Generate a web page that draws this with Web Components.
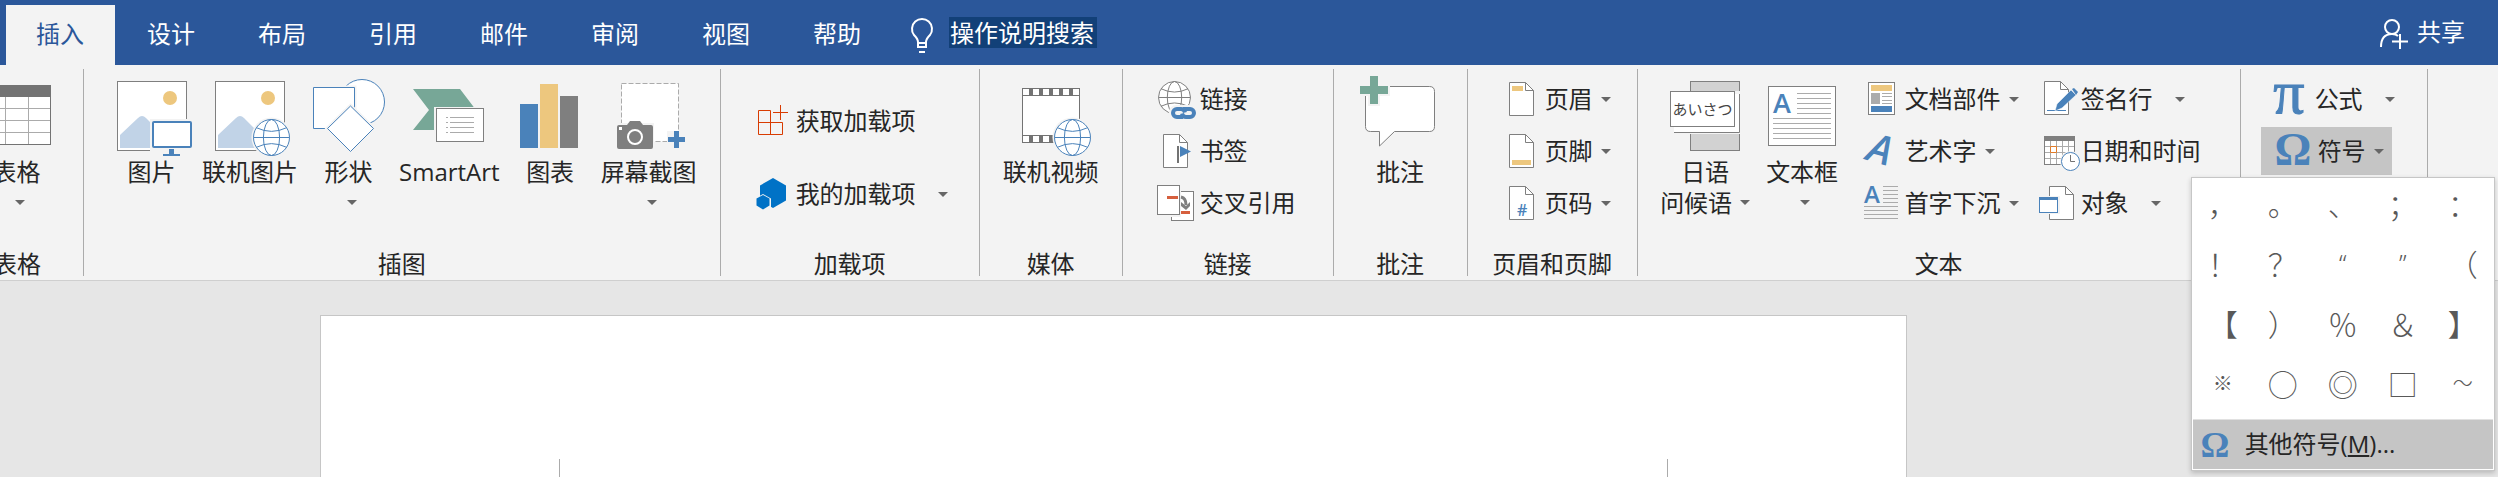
<!DOCTYPE html>
<html lang="zh-CN">
<head>
<meta charset="utf-8">
<title>文档编辑器</title>
<style>
  html, body { margin: 0; height: 100%; }
  body {
    font: 24px/31px "Open Sans", "Noto Sans CJK SC", sans-serif;
    color: #262626;
    background: #e6e6e6;
    overflow: hidden;
  }
</style>
</head>
<body>
<word-window></word-window>

<script>
const BLUE = '#4a82ba', GRAY = '#7f7f7f', GOLD = '#edc77e', GREEN = '#77a797';

const globe = (cx, cy, r, color) => `
  <circle cx="${cx}" cy="${cy}" r="${r + 2}" fill="#f3f3f3"/>
  <g fill="none" stroke="${color}">
    <circle cx="${cx}" cy="${cy}" r="${r}" fill="#fff"/>
    <ellipse cx="${cx}" cy="${cy}" rx="${r * .45}" ry="${r}"/>
    <path d="M${cx - r} ${cy}h${2 * r}"/>
    <path d="M${cx - r * .85} ${cy - r * .55}q${r * .85} ${r * .42} ${r * 1.7} 0M${cx - r * .85} ${cy + r * .55}q${r * .85} ${-r * .42} ${r * 1.7} 0"/>
  </g>`;
const sheet = (x, y) => `
  <path d="M${x} ${y}h16l8 8v25h-24z" fill="#fff" stroke="${GRAY}"/>
  <path d="M${x + 16} ${y}v8h8" fill="none" stroke="${GRAY}"/>`;
const photo = `
  <rect x="13.5" y="3.5" width="69" height="69" fill="#fff" stroke="${GRAY}"/>
  <circle cx="66" cy="20" r="7" fill="${GOLD}"/>
  <path d="M16 70V57L34 40q4-4 8 0l30 30z" fill="#c1d3e7"/>`;
const rules = (x1, x2, ys) => `<path stroke="#ababab" d="${ys.map(y => `M${x1} ${y}H${x2}`).join('')}"/>`;

const ICONS = {
  table: `<rect x="13.5" y="7.5" width="68" height="59" fill="#fff" stroke="#737373"/>
    <path d="M36.5 18v48M59.5 18v48M14 30.5h67M14 42.5h67M14 54.5h67" stroke="#ababab"/>
    <path d="M13 7h69v12H13z" fill="#737373"/>`,
  picture: `${photo}<rect x="46" y="41" width="44" height="32" fill="#f3f3f3"/>
    <rect x="49" y="44" width="38" height="25" rx="1" fill="#fff" stroke="${BLUE}" stroke-width="2"/>
    <path d="M65 71h5v5h6v2H59v-2h6z" fill="${BLUE}"/>`,
  online: photo + globe(69.5, 59.5, 18, BLUE),
  shapes: `<g fill="#fff" stroke="${BLUE}"><circle cx="61" cy="24" r="22.5"/>
    <path d="M12.500 9.500h41v41h-41z" stroke="#f3f3f3" stroke-width="4"/><path d="M12.500 9.500h41v41h-41z"/>
    <path d="M49.500 28l23 22.500-23 23-23-23z" stroke="#f3f3f3" stroke-width="4"/><path d="M49.500 28l23 22.500-23 23-23-23z"/></g>`,
  smartart: `<path d="M12 11h47l16 21-16 20H12l16-20z" fill="${GREEN}"/>
    <path d="M33 29h52v38H33z" fill="#f3f3f3"/><rect x="35.500" y="30.500" width="47" height="33" fill="#fff" stroke="${GRAY}"/>
    <path d="M45 39.500h2m2 0h24M45 44.500h2m2 0h24M45 49.500h2m2 0h24M45 54.500h2m2 0h24" stroke="#ababab"/>`,
  chart: `<path d="M18 26h18v44H18z" fill="${BLUE}"/><path d="M38 6h18v64H38z" fill="${GOLD}"/><path d="M58 18h18v52H58z" fill="${GRAY}"/>`,
  screenshot: `<rect x="20.500" y="5.500" width="57" height="58" fill="#fff" stroke="#ababab" stroke-dasharray="5 2"/>
    <path d="M14 45h39v28H14zM66 53h20v18H66z" fill="#f3f3f3"/><path d="M26 45l3-4h11l3 4z" fill="#fff"/>
    <path d="M16 49q0-2 2-2h8l3-4h10l3 4h8q2 0 2 2v20q0 2-2 2H18q-2 0-2-2z" fill="${GRAY}"/>
    <path d="M18 49h3v3h-3z" fill="#fff"/><circle cx="34" cy="59" r="7" fill="none" stroke="#fff" stroke-width="2"/>
    <path d="M73 53h5v6h6v5h-6v6h-5v-6h-6v-5h6z" fill="${BLUE}"/>`,
  video: `<rect x="19.500" y="10.500" width="57" height="54" fill="#fff" stroke="#737373"/>
    <path d="M20 17.500h56M20 57.500h56" stroke="#737373"/>
    <path d="M26 14h51M26 61h51" stroke="#737373" stroke-width="7" stroke-dasharray="4 6"/>` + globe(69.5, 59.5, 18, BLUE),
  comment: `<path d="M18.500 8.500h59q5 0 5 5v35q0 5-5 5h-35l-15 14.500v-14.500h-9q-5 0-5-5v-35q0-5 5-5z" fill="#fff" stroke="${GRAY}"/>
    <path d="M16-4h12v10h10v12H28v10H16V18H6V6h10z" fill="#f3f3f3"/>
    <path d="M18-2h8v10h10v8H26v10h-8V16H8V8h10z" fill="${GREEN}"/>`,
  greeting: `<rect x="33.500" y="3.500" width="49" height="69" fill="#d2d2d2" stroke="${GRAY}"/>
    <path d="M16 13h68v43H16z" fill="#f3f3f3"/><path d="M17 16h66v38H17z" fill="#fff"/><path d="M17 54.500h65.500V16" fill="none" stroke="${GRAY}"/>
    <rect x="13.500" y="13.500" width="64" height="35" fill="#fff" stroke="${GRAY}"/>
    <text x="15.500" y="37" font-size="15" font-family="Noto Sans CJK JP" fill="#444">あいさつ</text>`,
  textbox: `<rect x="14.500" y="8.500" width="67" height="59" fill="#fff" stroke="${GRAY}"/>
    <text x="19" y="35" font-size="27" font-weight="600" fill="${BLUE}">A</text>
    ${rules(43, 77, [15.5, 20.5, 25.5, 30.5, 35.5])}${rules(19, 77, [40.5, 45.5, 50.5, 55.5, 60.5])}`,
  getaddin: `<path d="M18.500 25.500v-12h-12v24h24v-12h-24m12 0v12M28.500 8v15M21 15.500h15" fill="none" stroke="#d83b01"/>`,
  myaddin: `<path d="M21 8l13 7.500v15L21 38 8 30.500v-15z" fill="#0072c6"/>
    <path d="M11 24l8 4.500v9L11 42l-8-4.500v-9z" fill="#f3f3f3"/><path d="M11 25l6.500 3.500v7L11 39.500l-6.500-4v-7z" fill="#0072c6"/>`,
  link: globe(18.5, 22.5, 16, GRAY) + `<rect x="13" y="30" width="27" height="15" rx="7" fill="#f3f3f3"/>
    <path d="M27 42h-6a4 4 0 0 1 0-8h4q3 0 4 3.500M27 34h7a4 4 0 0 1 0 8h-4q-3 0-4-3.500" fill="none" stroke="${BLUE}" stroke-width="4"/>`,
  bookmark: sheet(7.5, 7.5) + `<path d="M22 19v17" stroke="#737373" stroke-width="2"/><path d="M24 19l11 5.500L24 30z" fill="${BLUE}"/>`,
  crossref: `<rect x="15.500" y="12.500" width="22" height="29" fill="#fff" stroke="${GRAY}"/><path d="M0 5h25v33H0z" fill="#f3f3f3"/>
    <rect x="1.500" y="6.500" width="22" height="29" fill="#fff" stroke="${GRAY}"/>
    <path d="M11 17h11v3H11zM25 32h9v3h-9z" fill="#d65f3d"/><path d="M25 18q5 1 5 8" fill="none" stroke="${GRAY}" stroke-width="3"/><path d="M25 23l5 4 4-4v4l-4 4-5-4z" fill="${GRAY}"/>`,
  header: sheet(8.5, 7.5) + `<path d="M11 11h11v5H11z" fill="${GOLD}"/>`,
  footer: sheet(8.5, 7.5) + `<path d="M11 33h19v5H11z" fill="${GOLD}"/>`,
  pagenum: sheet(8.5, 7.5) + `<text x="16" y="37" font-size="16" font-weight="600" fill="${BLUE}">#</text>`,
  parts: `<rect x="7.500" y="7.500" width="26" height="32" fill="#fff" stroke="${GRAY}"/>
    <path d="M10 10h21v6H10z" fill="${GOLD}"/><path d="M10 18h9v11h-9z" fill="#ababab"/><path d="M10 31h21v6H10z" fill="${BLUE}"/>
    ${rules(21, 31, [18.5, 21.5, 25.5, 28.5])}`,
  wordart: `<text x="7" y="36" font-size="40" font-weight="600" font-style="italic" transform="rotate(16 18 24)" fill="${BLUE}">A</text>`,
  dropcap: `<text x="3" y="24" font-size="24" font-weight="600" fill="${BLUE}">A</text>
    ${rules(22, 37, [7.5, 11.5, 15.5, 19.5, 23.5])}${rules(3, 37, [27.5, 31.5, 35.5, 39.5])}`,
  signature: sheet(7.5, 6.5) + `<path d="M10 35.500h19" stroke="${BLUE}"/><path d="M18 36l2-7 14-14 5 5-14 13z" fill="${BLUE}" stroke="#fff" stroke-width="0.500"/><path d="M35 14l2-1 4 4-2 3z" fill="${BLUE}"/>`,
  date: `<rect x="7.500" y="9.500" width="30" height="28" fill="#fff" stroke="${GRAY}"/><path d="M7 9h31v5H7z" fill="${GRAY}"/>
    <path d="M13.500 14v23M19.500 14v23M25.500 14v23M31.500 14v23M8 19.500h29M8 25.500h29M8 31.500h29" stroke="#ababab"/>
    <path d="M13.500 19.500h6v6h-6z" fill="#fff" stroke="#e07b28"/>
    <circle cx="33.500" cy="34.500" r="10.500" fill="#f3f3f3"/><circle cx="33.500" cy="34.500" r="9" fill="#fff" stroke="${BLUE}"/><path d="M33.500 28v6.500H38" fill="none" stroke="#737373"/>`,
  object: sheet(12.5, 7.5) + `<path d="M1 17h22v18H1z" fill="#f3f3f3"/><rect x="2.500" y="18.500" width="18" height="15" fill="#fff" stroke="${BLUE}"/><path d="M2 18h19v3H2z" fill="${BLUE}"/>`,
  pi: `<text x="18" y="38" font-size="62" text-anchor="middle" font-family="Liberation Serif" fill="${BLUE}" stroke="${BLUE}" stroke-width="1">π</text>`,
  omega: `<text x="19" y="38" font-size="46" text-anchor="middle" font-family="Liberation Serif" font-weight="700" fill="${BLUE}">Ω</text>`,
  omegasmall: `<text x="20" y="36" font-size="36" text-anchor="middle" font-family="Liberation Serif" font-weight="700" fill="${BLUE}">Ω</text>`,
  bulb: `<g fill="none" stroke="#fff" stroke-width="2"><path d="M16 38v-5q0-3-4-7a10 10 0 1 1 16 0q-4 4-4 7v5zM15 34h10M17 43h6"/></g>`,
  share: `<g fill="none" stroke="#fff" stroke-width="2"><circle cx="17" cy="18" r="7"/><path d="M6 38q0-13 11-13 4 0 6 2M25 25v15M17 32.500h16"/></g>`
};

class Base extends HTMLElement {
  constructor() {
    super();
    this.attachShadow({ mode: 'open' });
  }
  draw(html) { this.shadowRoot.innerHTML = html; }
}

customElements.define('ribbon-icon', class extends Base {
  connectedCallback() {
    const [w, h] = this.hasAttribute('large') ? [96, 78] : [40, 48];
    this.draw(`<style>:host { display: block; flex: none; } svg { display: block; overflow: visible; }</style>
      <svg width="${w}" height="${h}" viewBox="0 0 ${w} ${h}" aria-hidden="true">${ICONS[this.getAttribute('name')]}</svg>`);
  }
});

customElements.define('drop-arrow', class extends Base {
  connectedCallback() {
    this.draw(`<style>
      :host { display: block; flex: none; border: solid transparent; border-width: 5px 5px 0; border-top-color: #666; }
    </style>`);
  }
});

customElements.define('large-button', class extends Base {
  connectedCallback() {
    const arrow = this.hasAttribute('drop') ? '<drop-arrow></drop-arrow>' : '';
    this.draw(`<style>
      :host { display: block; }
      button {
        display: flex; flex-direction: column; align-items: center;
        min-width: 97px; padding: 3px 0 0; border: 0; background: none;
        font: inherit; color: inherit; white-space: nowrap;
      }
      .name { padding: 0 2px; }
      .more { display: flex; align-items: center; gap: 8px; height: 31px; }
      .more.bare { padding-left: 6px; gap: 0; }
    </style>
    <button type="button"><ribbon-icon large name="${this.getAttribute('icon')}"></ribbon-icon>
      <span class="name"><slot></slot></span>
      <span class="more ${this.querySelector('[slot=more]') ? '' : 'bare'}"><slot name="more"></slot>${arrow}</span>
    </button>`);
  }
});

customElements.define('small-button', class extends Base {
  connectedCallback() {
    const arrow = this.hasAttribute('drop') ? '<drop-arrow></drop-arrow>' : '';
    this.draw(`<style>
      :host { display: block; }
      button {
        display: flex; align-items: center; height: 48px; padding: 0; border: 0;
        background: none; font: inherit; color: inherit; white-space: nowrap;
      }
      ribbon-icon { margin-right: 4px; }
      .name { padding-bottom: 2px; }
      drop-arrow { margin-left: 8px; }
      :host([drop=far]) drop-arrow { margin-left: 22px; }
      :host([open]) button { padding: 0 8px 0 13px; margin-left: -10px; background: #c5c5c5; }
    </style>
    <button type="button"><ribbon-icon name="${this.getAttribute('icon')}"></ribbon-icon><span class="name"><slot></slot></span>${arrow}</button>`);
  }
});

customElements.define('ribbon-group', class extends Base {
  connectedCallback() {
    this.draw(`<style>
      :host {
        display: flex; flex-direction: column; flex: none;
        box-sizing: border-box; min-height: 207px; border-right: 1px solid #ababab;
      }
      .body { display: flex; padding: 6px var(--end, 20px) 0 var(--start, 20px); }
      .label { margin-top: auto; text-align: center; line-height: 24px; min-height: 24px; }
    </style>
    <div class="body"><slot></slot></div><div class="label">${this.getAttribute('label') || ''}</div>`);
  }
});

customElements.define('button-stack', class extends Base {
  connectedCallback() {
    this.draw(`<style>
      :host { display: flex; flex-direction: column; gap: 4px; position: relative; }
      :host([loose]) { gap: 25px; padding-top: 22px; }
    </style><slot></slot>`);
  }
});

customElements.define('ribbon-tabs', class extends Base {
  connectedCallback() {
    const tabs = ['插入', '设计', '布局', '引用', '邮件', '审阅', '视图', '帮助'];
    this.draw(`<style>
      :host { display: flex; align-items: center; background: #2b579a; color: #fff; padding-left: 6px; height: 65px; }
      nav { display: flex; gap: 2px; align-self: flex-end; }
      a { padding: 0 31px 2px 30px; line-height: 58px; color: inherit; text-decoration: none; white-space: nowrap; }
      a[aria-current] { background: #f3f3f3; color: #2b579a; }
      label { display: flex; align-items: center; gap: 7px; margin-left: 10px; }
      input {
        width: 147px; height: 31px; padding: 0 0 0 1px; border: 0; margin: 0;
        background: #124078; color: inherit; font: inherit;
      }
      button {
        display: flex; align-items: center; gap: 2px; margin: 0 33px 0 auto; padding: 0;
        border: 0; background: none; color: inherit; font: inherit;
      }
      .name { padding-bottom: 2px; }
    </style>
    <nav>${tabs.map((t, i) => `<a href="#"${i ? '' : ' aria-current="page"'}>${t}</a>`).join('')}</nav>
    <label><ribbon-icon name="bulb"></ribbon-icon><input type="text" value="操作说明搜索" aria-label="操作说明搜索"></label>
    <button type="button"><ribbon-icon name="share"></ribbon-icon><span class="name">共享</span></button>`);
  }
});

customElements.define('symbol-menu', class extends Base {
  connectedCallback() {
    const marks = [...'，。、；：！？“”（【）％＆】※○◎□～'];
    this.draw(`<style>
      :host {
        display: block; position: absolute; top: 102px; left: -80px; z-index: 1; box-sizing: border-box;
        padding: 0 1px 1px; background: #fff; border: 1px solid #c6c6c6; box-shadow: 0 2px 5px rgba(0,0,0,.2);
      }
      .grid { display: grid; grid-template-columns: repeat(5, 60px); grid-auto-rows: 60px; padding-bottom: 1px; }
      .grid button {
        padding: 0 0 10px; border: 0; background: none; color: #595959;
        font: 300 30px/50px "Noto Sans CJK SC", sans-serif;
      }
      .grid .narrow { font-family: "Noto Sans", sans-serif; font-size: 24px; }
      .grid .small { font-size: 20px; }
      .more {
        display: flex; align-items: center; gap: 10px; width: 100%; height: 50px; padding: 0 2px;
        border: 0; border-top: 1px solid #e1e1e1; background: #c5c5c5;
        color: inherit; font: inherit;
      }
      .more span { padding-bottom: 2px; }
    </style>
    <div class="grid">${marks.map(m => `<button type="button" class="${/[“”]/.test(m) ? 'narrow' : /[※～]/.test(m) ? 'small' : ''}">${m}</button>`).join('')}</div>
    <button type="button" class="more"><ribbon-icon name="omegasmall"></ribbon-icon><span>其他符号(<u>M</u>)...</span></button>`);
  }
});

customElements.define('ribbon-bar', class extends Base {
  connectedCallback() {
    this.draw(`<style>
      :host { display: flex; padding: 4px 0; background: #f3f3f3; border-bottom: 1px solid #cfcfcf; }
      .tables { margin-left: -49px; --start: 17px; --end: 18px; }
      .pictures { --start: 19px; --end: 21px; }
      .addins { --start: 31px; --end: 31px; }
      .media { --start: 21px; --end: 21px; }
      .links { --start: 33px; --end: 37px; }
      .comments { --start: 18px; --end: 18px; }
      .headers { --start: 33px; --end: 26px; }
      .text { --start: 19px; --end: 39px; }
      .symbols { --start: 30px; --end: 32px; }
      .parts { margin-left: 10px; }
      .misc { margin-left: 18px; }
    </style>
    <ribbon-group class="tables" label="表格"><large-button icon="table" drop>表格</large-button></ribbon-group>
    <ribbon-group class="pictures" label="插图">
      <large-button icon="picture">图片</large-button>
      <large-button icon="online">联机图片</large-button>
      <large-button icon="shapes" drop>形状</large-button>
      <large-button icon="smartart">SmartArt</large-button>
      <large-button icon="chart">图表</large-button>
      <large-button icon="screenshot" drop>屏幕截图</large-button>
    </ribbon-group>
    <ribbon-group class="addins" label="加载项">
      <button-stack loose>
        <small-button icon="getaddin">获取加载项</small-button>
        <small-button icon="myaddin" drop="far">我的加载项</small-button>
      </button-stack>
    </ribbon-group>
    <ribbon-group class="media" label="媒体"><large-button icon="video">联机视频</large-button></ribbon-group>
    <ribbon-group class="links" label="链接">
      <button-stack>
        <small-button icon="link">链接</small-button>
        <small-button icon="bookmark">书签</small-button>
        <small-button icon="crossref">交叉引用</small-button>
      </button-stack>
    </ribbon-group>
    <ribbon-group class="comments" label="批注"><large-button icon="comment">批注</large-button></ribbon-group>
    <ribbon-group class="headers" label="页眉和页脚">
      <button-stack>
        <small-button icon="header" drop>页眉</small-button>
        <small-button icon="footer" drop>页脚</small-button>
        <small-button icon="pagenum" drop>页码</small-button>
      </button-stack>
    </ribbon-group>
    <ribbon-group class="text" label="文本">
      <large-button icon="greeting" drop>日语<span slot="more">问候语</span></large-button>
      <large-button icon="textbox" drop>文本框</large-button>
      <button-stack class="parts">
        <small-button icon="parts" drop>文档部件</small-button>
        <small-button icon="wordart" drop>艺术字</small-button>
        <small-button icon="dropcap" drop>首字下沉</small-button>
      </button-stack>
      <button-stack class="misc">
        <small-button icon="signature" drop="far">签名行</small-button>
        <small-button icon="date">日期和时间</small-button>
        <small-button icon="object" drop="far">对象</small-button>
      </button-stack>
    </ribbon-group>
    <ribbon-group class="symbols">
      <button-stack>
        <small-button icon="pi" drop="far">公式</small-button>
        <small-button icon="omega" drop open>符号</small-button>
        <symbol-menu></symbol-menu>
      </button-stack>
    </ribbon-group>`);
  }
});

customElements.define('document-page', class extends Base {
  connectedCallback() {
    this.draw(`<style>
      :host { display: flex; flex: 1; padding: 34px 591px 0 320px; }
      .paper { flex: 1; display: flex; border: 1px solid #c6c6c6; border-bottom: 0; background: #fff; padding: 143px 238px 0; }
      .area { flex: 1; border: solid #ababab; border-width: 0 1px; }
    </style>
    <div class="paper"><div class="area"></div></div>`);
  }
});

customElements.define('word-window', class extends Base {
  connectedCallback() {
    this.draw(`<style>:host { display: flex; flex-direction: column; min-height: 100vh; }</style>
      <ribbon-tabs></ribbon-tabs><ribbon-bar></ribbon-bar><document-page></document-page>`);
  }
});
</script>
</body>
</html>
